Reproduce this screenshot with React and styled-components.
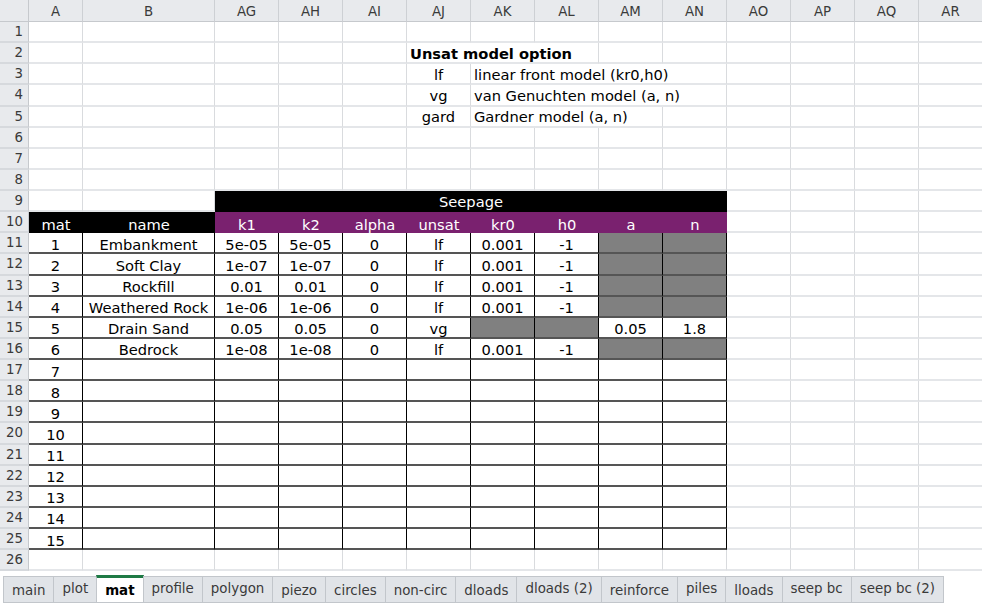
import React from 'react';
import styled, { createGlobalStyle, css } from 'styled-components';

const GlobalStyle = createGlobalStyle`
  html, body { margin: 0; padding: 0; background: #fff; }
  body { font-family: "DejaVu Sans", Verdana, sans-serif; overflow: hidden; }
  * { box-sizing: border-box; }
`;

const COLS = ['A', 'B', 'AG', 'AH', 'AI', 'AJ', 'AK', 'AL', 'AM', 'AN', 'AO', 'AP', 'AQ', 'AR'];

const Page = styled.div`
  width: 982px;
  height: 603px;
  overflow: hidden;
  display: flex;
  flex-direction: column;
`;

const Sheet = styled.div`
  display: grid;
  grid-template-columns: 29px 54px 132px repeat(12, 64px);
  grid-template-rows: 22px repeat(26, 21.13px);
  width: 982px;
  overflow: hidden;
`;

const headerBase = css`
  background: #e8eaed;
  color: #3a3a3a;
  font-size: 13.33px;
  display: flex;
  align-items: center;
`;

const Corner = styled.div`
  ${headerBase};
  border-right: 1px solid #c6c9cd;
  border-bottom: 1px solid #c6c9cd;
`;

const ColHead = styled.div`
  ${headerBase};
  justify-content: center;
  padding-top: 1px;
  border-right: 1px solid #cdd0d4;
  border-bottom: 1px solid #c6c9cd;
`;

const RowHead = styled.div`
  ${headerBase};
  justify-content: flex-end;
  padding-right: 5px;
  border-right: 1px solid #c6c9cd;
  border-bottom: 2px solid #d6d9dd;
`;

const Cell = styled.div`
  grid-column: span ${p => p.$span || 1};
  display: flex;
  align-items: center;
  justify-content: ${p => (p.$align === 'left' ? 'flex-start' : 'center')};
  padding: 1px ${p => (p.$align === 'left' ? '3px' : '0')} 0;
  white-space: nowrap;
  overflow: hidden;
  font-size: 14.67px;
  font-weight: ${p => (p.$bold ? 'bold' : 'normal')};
  color: #000;
  border-right: 1px solid #d9dbde;
  border-bottom: 2px solid #e4e6e9;
`;

const HeadCell = styled.div`
  grid-column: span ${p => p.$span || 1};
  display: flex;
  align-items: center;
  justify-content: center;
  font-size: 14.67px;
  color: #fff;
  white-space: nowrap;
  background: ${p => (p.$tone === 'purple' ? '#7a216f' : '#000')};
  padding-top: ${p => (p.$banner ? '0' : '3px')};
`;

const TableCell = styled.div`
  display: flex;
  align-items: center;
  justify-content: center;
  white-space: nowrap;
  font-size: 14.67px;
  color: #000;
  padding-top: 3px;
  background: ${p => (p.$shade ? '#808080' : '#fff')};
  border-right: 1px solid #000;
  border-bottom: 2px solid #555;
`;

const TabBar = styled.div`
  display: flex;
  align-items: flex-start;
  padding: 5px 0 0 3px;
  height: 32px;
  background: #fff;
`;

const Tab = styled.div`
  height: 27px;
  display: flex;
  align-items: center;
  padding: 1px 8px ${p => (p.$raised ? '3px' : '0')};
  margin-left: -1px;
  background: #e1e4e8;
  border: 1px solid #c2c6cb;
  color: #3a3a3a;
  font-size: 13.4px;
  white-space: nowrap;
  &:first-child { margin-left: 0; }
  ${p =>
    p.$active &&
    css`
      background: #fff;
      border-top: 3px solid #1e7a45;
      margin-top: -1px;
      height: 28px;
      padding-top: 0;
      color: #000;
      font-weight: bold;
    `}
`;

const materials = [
  { mat: 1, name: 'Embankment', k1: '5e-05', k2: '5e-05', unsat: 'lf' },
  { mat: 2, name: 'Soft Clay', k1: '1e-07', k2: '1e-07', unsat: 'lf' },
  { mat: 3, name: 'Rockfill', k1: '0.01', k2: '0.01', unsat: 'lf' },
  { mat: 4, name: 'Weathered Rock', k1: '1e-06', k2: '1e-06', unsat: 'lf' },
  { mat: 5, name: 'Drain Sand', k1: '0.05', k2: '0.05', unsat: 'vg', a: '0.05', n: '1.8' },
  { mat: 6, name: 'Bedrock', k1: '1e-08', k2: '1e-08', unsat: 'lf' },
];

const tabs = [
  { label: 'main' },
  { label: 'plot', raised: true },
  { label: 'mat', active: true },
  { label: 'profile', raised: true },
  { label: 'polygon', raised: true },
  { label: 'piezo' },
  { label: 'circles' },
  { label: 'non-circ' },
  { label: 'dloads' },
  { label: 'dloads (2)', raised: true },
  { label: 'reinforce' },
  { label: 'piles', raised: true },
  { label: 'lloads' },
  { label: 'seep bc', raised: true },
  { label: 'seep bc (2)', raised: true },
];

const blanks = (n, key) => Array.from({ length: n }, (_, i) => <Cell key={`${key}-${i}`} />);

function buildRow(r) {
  const cells = [<RowHead key="h">{r}</RowHead>];
  if (r === 2) {
    cells.push(...blanks(5, 'a'));
    cells.push(<Cell key="t" $span={3} $align="left" $bold>Unsat model option</Cell>);
    cells.push(...blanks(6, 'b'));
  } else if (r >= 3 && r <= 5) {
    const notes = {
      3: ['lf', 'linear front model (kr0,h0)', 4],
      4: ['vg', 'van Genuchten model (a, n)', 4],
      5: ['gard', 'Gardner model (a, n)', 3],
    }[r];
    cells.push(...blanks(5, 'a'));
    cells.push(<Cell key="c">{notes[0]}</Cell>);
    cells.push(<Cell key="d" $span={notes[2]} $align="left">{notes[1]}</Cell>);
    cells.push(...blanks(8 - notes[2], 'b'));
  } else if (r === 9) {
    cells.push(...blanks(2, 'a'));
    cells.push(<HeadCell key="s" $span={8} $banner>Seepage</HeadCell>);
    cells.push(...blanks(4, 'b'));
  } else if (r === 10) {
    cells.push(<HeadCell key="m">mat</HeadCell>);
    cells.push(<HeadCell key="n">name</HeadCell>);
    ['k1', 'k2', 'alpha', 'unsat', 'kr0', 'h0', 'a', 'n'].forEach(h =>
      cells.push(<HeadCell key={h} $tone="purple">{h}</HeadCell>)
    );
    cells.push(...blanks(4, 'b'));
  } else if (r >= 11 && r <= 16) {
    const m = materials[r - 11];
    const lf = m.unsat === 'lf';
    cells.push(<TableCell key="1">{m.mat}</TableCell>);
    cells.push(<TableCell key="2">{m.name}</TableCell>);
    cells.push(<TableCell key="3">{m.k1}</TableCell>);
    cells.push(<TableCell key="4">{m.k2}</TableCell>);
    cells.push(<TableCell key="5">0</TableCell>);
    cells.push(<TableCell key="6">{m.unsat}</TableCell>);
    cells.push(<TableCell key="7" $shade={!lf}>{lf ? '0.001' : ''}</TableCell>);
    cells.push(<TableCell key="8" $shade={!lf}>{lf ? '-1' : ''}</TableCell>);
    cells.push(<TableCell key="9" $shade={lf}>{lf ? '' : m.a}</TableCell>);
    cells.push(<TableCell key="10" $shade={lf}>{lf ? '' : m.n}</TableCell>);
    cells.push(...blanks(4, 'b'));
  } else if (r >= 17 && r <= 25) {
    cells.push(<TableCell key="1">{r - 10}</TableCell>);
    for (let i = 0; i < 9; i++) cells.push(<TableCell key={`e${i}`} />);
    cells.push(...blanks(4, 'b'));
  } else {
    cells.push(...blanks(14, 'a'));
  }
  return <React.Fragment key={r}>{cells}</React.Fragment>;
}

export default function App() {
  return (
    <Page>
      <GlobalStyle />
      <Sheet>
        <Corner />
        {COLS.map(c => (
          <ColHead key={c}>{c}</ColHead>
        ))}
        {Array.from({ length: 26 }, (_, i) => buildRow(i + 1))}
      </Sheet>
      <TabBar>
        {tabs.map(t => (
          <Tab key={t.label} $active={t.active} $raised={t.raised}>
            {t.label}
          </Tab>
        ))}
      </TabBar>
    </Page>
  );
}
